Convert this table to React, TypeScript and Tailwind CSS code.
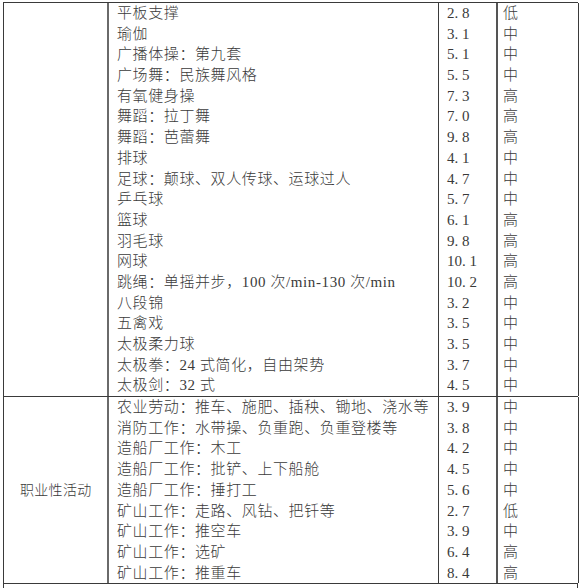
import React from 'react';

type Row = { name: string; met: string; level: string };

const leisure: Row[] = [
  { name: '平板支撑', met: '2.8', level: '低' },
  { name: '瑜伽', met: '3.1', level: '中' },
  { name: '广播体操：第九套', met: '5.1', level: '中' },
  { name: '广场舞：民族舞风格', met: '5.5', level: '中' },
  { name: '有氧健身操', met: '7.3', level: '高' },
  { name: '舞蹈：拉丁舞', met: '7.0', level: '高' },
  { name: '舞蹈：芭蕾舞', met: '9.8', level: '高' },
  { name: '排球', met: '4.1', level: '中' },
  { name: '足球：颠球、双人传球、运球过人', met: '4.7', level: '中' },
  { name: '乒乓球', met: '5.7', level: '中' },
  { name: '篮球', met: '6.1', level: '高' },
  { name: '羽毛球', met: '9.8', level: '高' },
  { name: '网球', met: '10.1', level: '高' },
  { name: '跳绳：单摇并步，100 次/min-130 次/min', met: '10.2', level: '高' },
  { name: '八段锦', met: '3.2', level: '中' },
  { name: '五禽戏', met: '3.5', level: '中' },
  { name: '太极柔力球', met: '3.5', level: '中' },
  { name: '太极拳：24 式简化，自由架势', met: '3.7', level: '中' },
  { name: '太极剑：32 式', met: '4.5', level: '中' },
];

const work: Row[] = [
  { name: '农业劳动：推车、施肥、插秧、锄地、浇水等', met: '3.9', level: '中' },
  { name: '消防工作：水带操、负重跑、负重登楼等', met: '3.8', level: '中' },
  { name: '造船厂工作：木工', met: '4.2', level: '中' },
  { name: '造船厂工作：批铲、上下船舱', met: '4.5', level: '中' },
  { name: '造船厂工作：捶打工', met: '5.6', level: '中' },
  { name: '矿山工作：走路、风钻、把钎等', met: '2.7', level: '低' },
  { name: '矿山工作：推空车', met: '3.9', level: '中' },
  { name: '矿山工作：选矿', met: '6.4', level: '高' },
  { name: '矿山工作：推重车', met: '8.4', level: '高' },
];

// numbers were typeset with half-width cells, so the dot gets a full digit cell
function Met({ value }: { value: string }) {
  const [a, b] = value.split('.');
  return (
    <span>
      {a}
      <span className="inline-block w-[7.5px]">.</span>
      {b}
    </span>
  );
}

function Section({ label, rows }: { label?: string; rows: Row[] }) {
  return (
    <div className="grid grid-cols-[105px_330px_59px_81px] border-b border-[#3a3a3a]">
      <div className="border-r-[2px] border-[#6a6a6a] flex items-center pl-[16px] text-[14px] tracking-[0.3px]">
        {label}
      </div>
      <div className="border-r border-[#3a3a3a] pl-[8px] tracking-[0.6px]">
        {rows.map((r) => (
          <div key={r.name} className="h-[20.7px] leading-[20.7px] whitespace-nowrap">
            {r.name}
          </div>
        ))}
      </div>
      <div className="border-r-[2px] border-[#555] pl-[8px]">
        {rows.map((r, i) => (
          <div key={i} className="h-[20.7px] leading-[20.7px]">
            <Met value={r.met} />
          </div>
        ))}
      </div>
      <div className="border-r border-[#3a3a3a] pl-[5px]">
        {rows.map((r, i) => (
          <div key={i} className="h-[20.7px] leading-[20.7px]">
            {r.level}
          </div>
        ))}
      </div>
    </div>
  );
}

export default function App() {
  return (
    <div className="w-[581px] h-[588px] overflow-hidden bg-white pt-[2px]">
      <div
        className="ml-[3px] w-[575px] border-l border-t border-[#3a3a3a] text-[15px] font-light text-[#3a3a3a]"
        style={{ fontFamily: '"Liberation Serif", "Noto Sans CJK SC", serif' }}
      >
        <Section rows={leisure} />
        <Section label="职业性活动" rows={work} />
        <div className="h-[10px] border-r border-[#3a3a3a]" />
      </div>
    </div>
  );
}
